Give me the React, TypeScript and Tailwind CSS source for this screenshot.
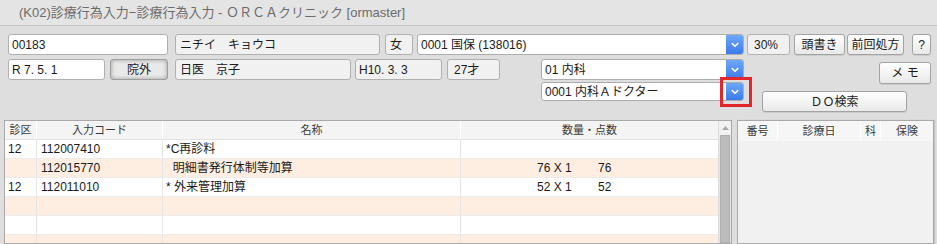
import React from "react";

const FONT = "font-['Liberation_Sans','Noto_Sans_CJK_JP',sans-serif]";

function Chevron() {
  return (
    <svg width="8" height="6" viewBox="0 0 8 6" fill="none">
      <path d="M1.2 1.5 L4 4.3 L6.8 1.5" stroke="white" strokeWidth="1.6" strokeLinecap="round" strokeLinejoin="round" />
    </svg>
  );
}

function Combo({ text, className }: { text: string; className: string }) {
  return (
    <div className={`flex border border-[#adadad] rounded-[3px] bg-white overflow-hidden ${className}`}>
      <div className="flex-1 flex items-center pl-[3px] text-[12px] text-[#1a1a1a] whitespace-nowrap">{text}</div>
      <div className="w-[17px] flex items-center justify-center bg-gradient-to-b from-[#6ea8fa] to-[#3b7be9]">
        <Chevron />
      </div>
    </div>
  );
}

const field = "flex items-center border border-[#b0b0b0] rounded-[3px] text-[12px] text-[#1a1a1a] whitespace-nowrap";
const btn =
  "flex items-center justify-center border border-[#a3a3a3] rounded-[3px] bg-gradient-to-b from-[#ffffff] to-[#e9e9e9] text-[12px] text-[#1a1a1a] whitespace-nowrap shadow-[0_1px_0_rgba(0,0,0,0.08)]";

type Row = { ku: string; code: string; name: string; qty: string; pts: string };
const rows: Row[] = [
  { ku: "12", code: "112007410", name: "*C再診料", qty: "", pts: "" },
  { ku: "", code: "112015770", name: "\u00a0\u00a0明細書発行体制等加算", qty: "76 X 1", pts: "76" },
  { ku: "12", code: "112011010", name: "* 外来管理加算", qty: "52 X 1", pts: "52" },
  { ku: "", code: "", name: "", qty: "", pts: "" },
  { ku: "", code: "", name: "", qty: "", pts: "" },
  { ku: "", code: "", name: "", qty: "", pts: "" },
];

export default function App() {
  return (
    <div className={`w-[937px] h-[244px] bg-[#dedede] overflow-hidden flex flex-col ${FONT}`}>
      {/* title bar */}
      <div className="h-[26px] shrink-0 bg-[#e4e4e4] border-b border-[#c6c6c6] flex items-center pl-[19px] text-[13px] text-[#6b6b6b] whitespace-nowrap">
        (K02)診療行為入力−診療行為入力 - ＯＲＣＡクリニック [ormaster]
      </div>

      {/* row 1 */}
      <div className="flex items-stretch h-[21px] mt-[8px] pl-[8px] shrink-0">
        <div className={`${field} w-[160px] bg-white pl-[3px]`}>00183</div>
        <div className={`${field} ml-[7px] w-[205px] bg-[#f1f1f1] pl-[4px]`}>ニチイ　キョウコ</div>
        <div className={`${field} ml-[5px] w-[28px] bg-[#f1f1f1] pl-[4px]`}>女</div>
        <Combo text="0001 国保 (138016)" className="ml-[4px] w-[327px]" />
        <div className={`${field} ml-[3px] w-[43px] bg-[#f1f1f1] pl-[6px]`}>30%</div>
        <div className={`${btn} ml-[4px] w-[51px]`}>頭書き</div>
        <div className={`${btn} ml-[2px] w-[57px]`}>前回処方</div>
        <div className={`${btn} ml-[8px] w-[19px]`}>?</div>
      </div>

      {/* rows 2-3 */}
      <div className="flex items-start mt-[4px] pl-[8px] shrink-0">
        <div className={`${field} h-[21px] w-[97px] bg-white pl-[3px]`}>R 7. 5. 1</div>
        <div className="ml-[5px] h-[21px] w-[58px] flex items-center justify-center border border-[#9d9d9d] rounded-[3px] bg-[#e9e9e9] shadow-[inset_0_0_4px_rgba(0,0,0,0.35)] text-[12px] text-[#1a1a1a]">
          院外
        </div>
        <div className={`${field} h-[21px] ml-[7px] w-[176px] bg-[#f1f1f1] pl-[4px]`}>日医　京子</div>
        <div className={`${field} h-[21px] ml-[4px] w-[87px] bg-[#f1f1f1] pl-[3px]`}>H10. 3. 3</div>
        <div className={`${field} h-[21px] ml-[5px] w-[53px] bg-[#f1f1f1] pl-[6px]`}>27才</div>

        <div className="ml-[41px] w-[203px] flex flex-col">
          <Combo text="01 内科" className="h-[21px] w-[203px]" />
          <div className="relative mt-[2px]">
            <Combo text="0001 内科Ａドクター" className="h-[19px] w-[203px]" />
            <div className="absolute left-[179px] top-[-5px] w-[32px] h-[30px] border-[3px] border-[#e3262c]" />
          </div>
        </div>

        <div className="ml-[18px] w-[169px] flex flex-col">
          <div className={`${btn} self-end mt-[3px] w-[52px] h-[22px]`}>メ モ</div>
          <div className={`${btn} mt-[7px] w-[145px] h-[21px]`}>ＤＯ検索</div>
        </div>
      </div>

      {/* tables */}
      <div className="flex mt-[8px] pl-[4px] flex-1 min-h-0">
        {/* left table */}
        <div className="w-[728px] border border-[#a9a9a9] bg-white flex overflow-hidden">
          <div className="w-[713px] flex flex-col">
            <div className="flex h-[19px] shrink-0 bg-[#f4f4f4] border-b border-[#e2e2e2] text-[11px] text-[#3a3a3a]">
              <div className="w-[32px] flex items-center justify-center border-r border-[#ffffff]">診区</div>
              <div className="w-[126px] flex items-center justify-center border-r border-[#ffffff]">入力コード</div>
              <div className="w-[298px] flex items-center justify-center border-r border-[#ffffff]">名称</div>
              <div className="w-[257px] flex items-center justify-center">数量・点数</div>
            </div>
            {rows.map((r, i) => (
              <div
                key={i}
                className={`flex h-[19px] shrink-0 border-b border-[#ececec] text-[12px] text-[#1a1a1a] whitespace-nowrap ${
                  i % 2 === 1 ? "bg-[#fdeee1]" : "bg-white"
                }`}
              >
                <div className="w-[32px] flex items-center pl-[3px] border-r border-[#e6e6e6]">{r.ku}</div>
                <div className="w-[126px] flex items-center pl-[4px] border-r border-[#e6e6e6]">{r.code}</div>
                <div className="w-[298px] flex items-center pl-[3px] border-r border-[#e6e6e6]">{r.name}</div>
                <div className="w-[257px] flex items-center pl-[76px]">
                  <span className="w-[61px]">{r.qty}</span>
                  <span>{r.pts}</span>
                </div>
              </div>
            ))}
          </div>
          {/* scrollbar */}
          <div className="w-[13px] flex flex-col bg-[#e6e6e6] border-l border-[#dcdcdc]">
            <div className="h-[14px] shrink-0 flex items-center justify-center bg-[#f2f2f2]">
              <svg width="7" height="4" viewBox="0 0 7 4">
                <path d="M0 4 L3.5 0 L7 4 Z" fill="#a9a9a9" />
              </svg>
            </div>
            <div className="flex-1 mx-[1px] bg-[#bcbcbc] border border-[#b0b0b0]" />
          </div>
        </div>

        {/* right table */}
        <div className="ml-[5px] w-[197px] border border-[#a9a9a9] bg-[#f1f1f1] flex flex-col overflow-hidden shadow-[1px_0_1px_rgba(0,0,0,0.12)]">
          <div className="flex h-[20px] shrink-0 bg-[#f6f6f6] text-[11px] text-[#3a3a3a]">
            <div className="w-[40px] flex items-center justify-center border-r border-[#ffffff]">番号</div>
            <div className="w-[83px] flex items-center justify-center border-r border-[#ffffff]">診療日</div>
            <div className="w-[20px] flex items-center justify-center border-r border-[#ffffff]">科</div>
            <div className="flex-1 flex items-center justify-center">保険</div>
          </div>
        </div>
      </div>
    </div>
  );
}
